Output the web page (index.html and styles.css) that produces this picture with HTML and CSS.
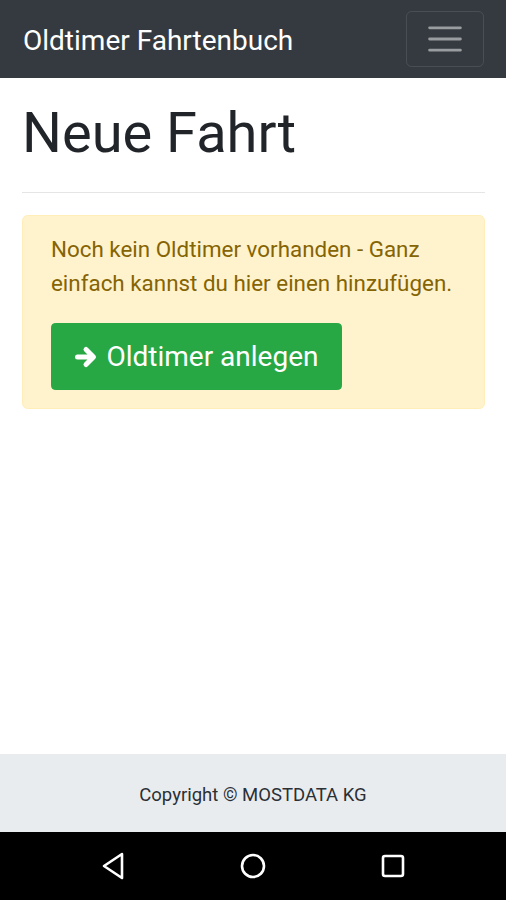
FILE: index.html
```html
<!DOCTYPE html>
<html lang="de">
<head>
  <meta charset="UTF-8" />
  <meta name="viewport" content="width=device-width, initial-scale=1.0"/>
  <title>Oldtimer Fahrtenbuch</title>
  <link rel="stylesheet" href="styles.css">
</head>
<body>
  <nav class="navbar">
    <a class="brand" href="#">Oldtimer Fahrtenbuch</a>
    <button class="toggler" type="button" aria-label="Menü">
      <svg width="42" height="42" viewBox="0 0 30 30">
        <path d="M4 7h22M4 15h22M4 23h22" stroke="rgba(255,255,255,0.5)" stroke-width="2" stroke-linecap="round"/>
      </svg>
    </button>
  </nav>

  <main class="container">
    <h1>Neue Fahrt</h1>
    <hr>
    <div class="alert">
      <p>Noch kein Oldtimer vorhanden - Ganz einfach kannst du hier einen hinzufügen.</p>
      <a class="btn" href="#">
        <svg class="btn-icon" width="24" height="24" viewBox="0 0 24 24">
          <path d="M3.5 12h15M12 4.5l7.5 7.5-7.5 7.5" fill="none" stroke="#fff" stroke-width="5" stroke-linecap="round" stroke-linejoin="round"/>
        </svg>
        Oldtimer anlegen
      </a>
    </div>
  </main>

  <footer class="footer">Copyright © MOSTDATA KG</footer>

  <div class="sysbar">
    <svg width="28" height="30" viewBox="0 0 28 30">
      <path d="M23 3L5 15l18 12z" fill="none" stroke="#fff" stroke-width="2.6" stroke-linejoin="round"/>
    </svg>
    <svg width="28" height="28" viewBox="0 0 28 28">
      <circle cx="14" cy="14" r="11" fill="none" stroke="#fff" stroke-width="2.6"/>
    </svg>
    <svg width="28" height="28" viewBox="0 0 28 28">
      <rect x="4" y="4" width="20" height="20" rx="2" fill="none" stroke="#fff" stroke-width="2.6"/>
    </svg>
  </div>
</body>
</html>
```

FILE: styles.css
```css
* {
  box-sizing: border-box;
}
body {
  margin: 0;
  min-height: 900px;
  display: flex;
  flex-direction: column;
  font-family: Roboto, "Noto Sans", sans-serif;
  font-size: 22.4px;
  line-height: 1.5;
  color: #212529;
  background: #fff;
}
.navbar {
  height: 78px;
  display: flex;
  align-items: center;
  justify-content: space-between;
  padding: 3px 22px 0 23px;
  background: #343a40;
}
.brand {
  color: #fff;
  font-size: 28px;
  text-decoration: none;
  line-height: 1.5;
}
.toggler {
  width: 78px;
  height: 56px;
  margin-top: -3px;
  display: flex;
  align-items: center;
  justify-content: center;
  background: transparent;
  border: 1.4px solid rgba(255,255,255,0.1);
  border-radius: 5.6px;
  padding: 0;
}
.container {
  flex: 1;
  padding: 0 21px 0 22px;
}
h1 {
  margin: 22px 0 11px;
  font-size: 56px;
  font-weight: 400;
  line-height: 1.2;
}
hr {
  margin: 25px 0 22px;
  border: 0;
  border-top: 1.4px solid rgba(0,0,0,0.1);
}
.alert {
  padding: 16.8px 28px 18px;
  background: #fff3cd;
  border: 1.4px solid #ffeeba;
  border-radius: 5.6px;
  color: #856404;
}
.alert p {
  margin: 0 0 23px;
}
.btn {
  display: inline-flex;
  align-items: center;
  gap: 8px;
  padding: 11.6px 22.4px;
  background: #28a745;
  border: 1.4px solid #28a745;
  border-radius: 4.2px;
  color: #fff;
  font-size: 28px;
  line-height: 1.5;
  text-decoration: none;
}
.footer {
  height: 78px;
  display: flex;
  align-items: center;
  justify-content: center;
  padding-top: 5px;
  background: #e9ecef;
  color: #2b3035;
  font-size: 18.5px;
}
.sysbar {
  height: 68px;
  display: flex;
  align-items: center;
  justify-content: space-around;
  padding: 0 43px;
  background: #000;
}
```
